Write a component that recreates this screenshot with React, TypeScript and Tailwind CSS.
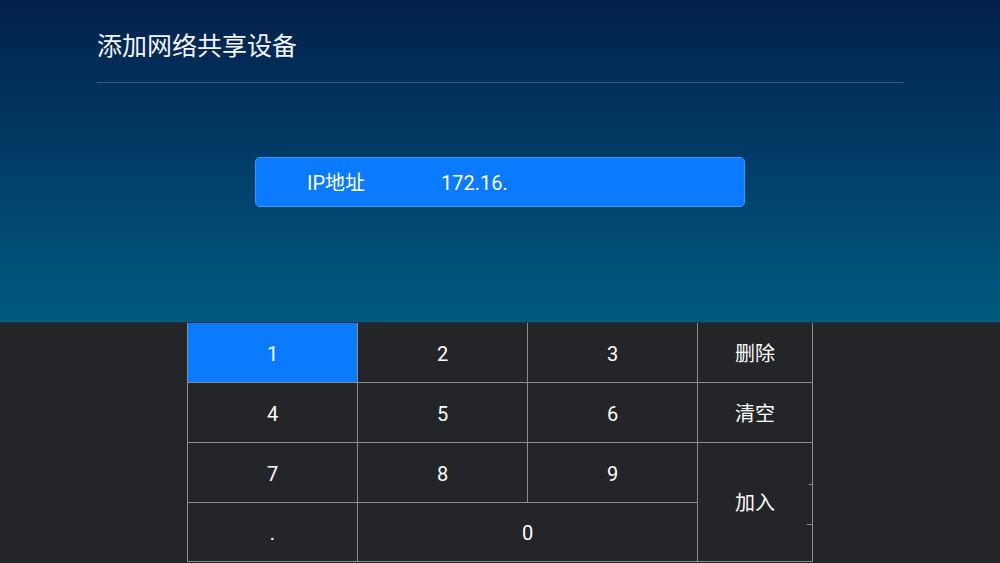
const keys = [
  { label: '1', cls: 'bg-[#0a7aff]' },
  { label: '2' },
  { label: '3' },
  { label: '删除' },
  { label: '4' },
  { label: '5' },
  { label: '6' },
  { label: '清空' },
  { label: '7' },
  { label: '8' },
  { label: '9' },
];

const App = () => {
  return (
    <div className="w-[1000px] h-[563px] flex flex-col overflow-hidden font-['Roboto','Noto_Sans_CJK_SC',sans-serif] text-white">
      <section className="h-[322px] bg-gradient-to-b from-[#03204d] to-[#005b81] px-[97px]">
        <div className="pt-[31px] pb-[19px] border-b border-[#2d5a82]">
          <h1 className="text-[25px] leading-[32px] text-[#f2f5f8]">添加网络共享设备</h1>
        </div>
        <div className="mt-[74px] mx-auto w-[490px] h-[50px] flex items-center pt-[1px] rounded-[5px] bg-[#0a7aff] border border-[#3d93ff] text-[20px]">
          <span className="w-[185px] pl-[51px]">IP地址</span>
          <span>172.16.</span>
        </div>
      </section>

      <section className="flex-1 bg-[#242528] border-t border-[#1c3442]">
        <div className="ml-[187px] w-[626px] grid grid-cols-[169px_169px_169px_114px] grid-rows-[59px_59px_59px_58px] gap-px p-px pt-0 bg-[#8d8d8f] text-[20px]">
          {keys.map((k) => (
            <div
              key={k.label}
              className={`flex items-center justify-center pt-[2px] ${k.cls ?? 'bg-[#242528]'}`}
            >
              {k.label}
            </div>
          ))}
          <div className="relative row-span-2 col-start-4 row-start-3 flex items-center justify-center pt-[2px] bg-[#242528]">
            加入
            <span className="absolute right-0 top-[41px] w-[3px] h-px bg-[#8d8d8f]" />
            <span className="absolute right-0 top-[81px] w-[5px] h-px bg-[#8d8d8f]" />
          </div>
          <div className="flex items-center justify-center pt-[2px] bg-[#242528] col-start-1 row-start-4">.</div>
          <div className="flex items-center justify-center pt-[2px] bg-[#242528] col-start-2 col-span-2 row-start-4">0</div>
        </div>
      </section>
    </div>
  );
};

export default App;
